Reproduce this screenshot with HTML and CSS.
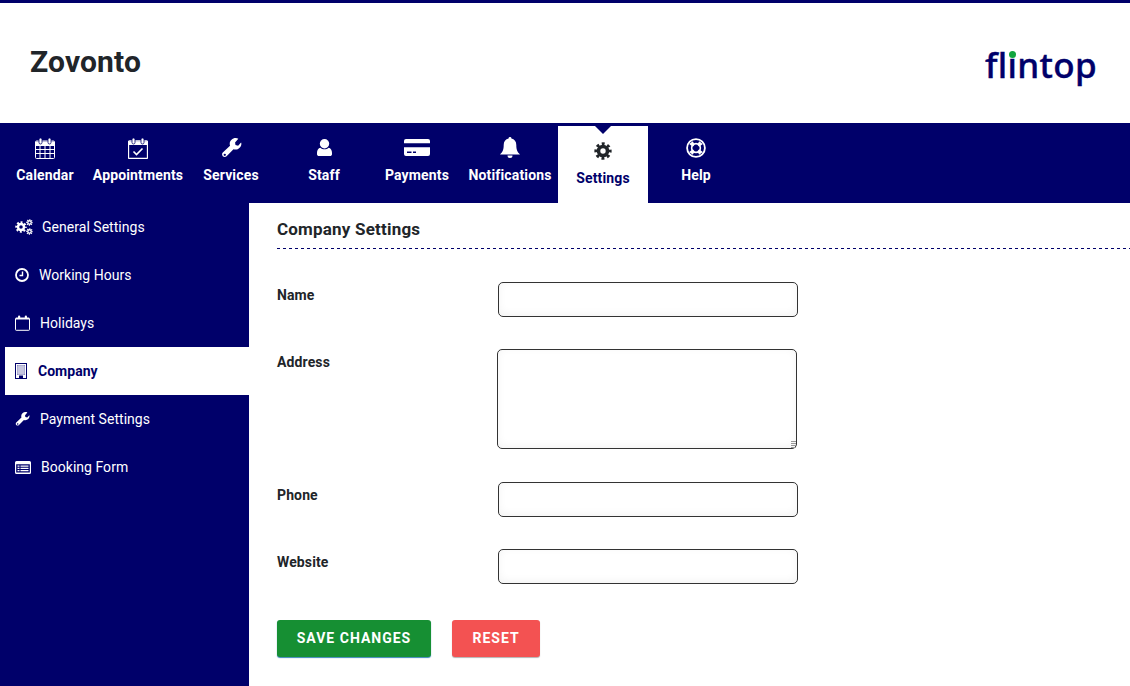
FILE: index.html
```html
<!DOCTYPE html>
<html lang="en">
<head>
	<meta charset="utf-8">
	<title>Zovonto - Company Settings</title>
	<link rel="stylesheet" href="styles.css">
</head>
<body>

	<!-- shared icons -->
	<svg class="icon-defs" width="0" height="0">
		<symbol id="i-wrench" viewBox="0 0 20 20">
			<path fill-rule="evenodd" d="M19.400 5.400c0 3-2.600 5.600-5.600 5.600-.7 0-1.300-.1-1.900-.3l-6.600 6.700c-1 1-2.600 1-3.600 0-.9-1-.9-2.500 0-3.500l6.900-6.600c-.2-.6-.3-1.200-.3-1.900C8.300 2.400 11 0 14 0c.9 0 1.800.2 2.500.6l-3.100 3.600.4 2.500 2.500.6 2.800-3.100c.2.300.3.800.3 1.200zM3.600 14.900a1.100 1.100 0 1 0 0 2.200 1.100 1.100 0 0 0 0-2.200z"/>
		</symbol>
		<symbol id="i-gear" viewBox="0 0 20 20">
			<circle cx="10" cy="10" r="5" fill="none" stroke="currentColor" stroke-width="4"/>
			<circle cx="10" cy="10" r="7.900" fill="none" stroke="currentColor" stroke-width="3.400" stroke-dasharray="3.200 3" stroke-dashoffset="1.600"/>
		</symbol>
	</svg>

	<header class="top-header">
		<h1 class="brand">Zovonto</h1>
		<div class="logo">fl<span class="logo-i">i</span>ntop</div>
	</header>

	<nav class="main-nav">
		<a class="nav-item">
			<svg class="nav-icon" width="20" height="22" viewBox="0 0 20 22">
				<path d="M1.500 4h17a1 1 0 0 1 1 1v15.500a1 1 0 0 1-1 1h-17a1 1 0 0 1-1-1V5a1 1 0 0 1 1-1z" fill="none" stroke="currentColor"/>
				<path d="M1 4.500h18v4.500H1z"/>
				<path d="M1 12.500h18M1 16.500h18M5 9v12M10 9v12M15 9v12" stroke="currentColor" fill="none"/>
				<rect x="4" y="1" width="3" height="6" rx="1.500" stroke="#00006a" stroke-width=".8"/>
				<rect x="13" y="1" width="3" height="6" rx="1.500" stroke="#00006a" stroke-width=".8"/>
			</svg>
			<span>Calendar</span>
		</a>
		<a class="nav-item">
			<svg class="nav-icon" width="20" height="22" viewBox="0 0 20 22">
				<path d="M1.500 4h17a1 1 0 0 1 1 1v15.500a1 1 0 0 1-1 1h-17a1 1 0 0 1-1-1V5a1 1 0 0 1 1-1z" fill="none" stroke="currentColor" stroke-width="1.300"/>
				<path d="M1 4.500h18v3.500H1z"/>
				<path d="M5.500 14.500l3 3 6-6" fill="none" stroke="currentColor" stroke-width="1.600"/>
				<rect x="4" y="1" width="3" height="6" rx="1.500" stroke="#00006a" stroke-width=".8"/>
				<rect x="13" y="1" width="3" height="6" rx="1.500" stroke="#00006a" stroke-width=".8"/>
			</svg>
			<span>Appointments</span>
		</a>
		<a class="nav-item">
			<svg class="nav-icon" width="21" height="22"><use href="#i-wrench" y="1" width="21" height="21"/></svg>
			<span>Services</span>
		</a>
		<a class="nav-item">
			<svg class="nav-icon" width="15" height="22" viewBox="0 0 15 22">
				<circle cx="7.500" cy="6.700" r="4.700"/>
				<path d="M3.400 10.800c1.100 1 2.500 1.500 4.100 1.500s3-.5 4.100-1.500c2.100.5 3.400 2.300 3.400 5v1.400c0 1-.9 1.800-2 1.800H2c-1.100 0-2-.8-2-1.800v-1.400c0-2.700 1.300-4.500 3.400-5z"/>
			</svg>
			<span>Staff</span>
		</a>
		<a class="nav-item">
			<svg class="nav-icon" width="26" height="22" viewBox="0 0 26 22">
				<path d="M2 2h22a2 2 0 0 1 2 2v2.300H0V4a2 2 0 0 1 2-2z"/>
				<path fill-rule="evenodd" d="M0 10.300h26V17a2 2 0 0 1-2 2H2a2 2 0 0 1-2-2zM3 14.500V16h4.500v-1.500zM9 14.500V16h3v-1.500z"/>
			</svg>
			<span>Payments</span>
		</a>
		<a class="nav-item">
			<svg class="nav-icon" width="20" height="22" viewBox="0 0 20 22">
				<path d="M10 0a1.400 1.400 0 0 1 1.400 1.500C14.500 2 16.300 4.500 16.300 8c0 5 1.200 7 3.700 9.500H0C2.500 15 3.700 13 3.700 8c0-3.500 1.800-6 4.900-6.500A1.400 1.400 0 0 1 10 0z"/>
				<path d="M7.500 18.500h5a2.500 2.500 0 0 1-5 0z"/>
			</svg>
			<span>Notifications</span>
		</a>
		<a class="nav-item nav-item-active">
			<svg class="nav-icon" width="18" height="22"><use href="#i-gear" y="2" width="18" height="18"/></svg>
			<span>Settings</span>
		</a>
		<a class="nav-item">
			<svg class="nav-icon" width="20" height="22" viewBox="-1 -1 22 22">
				<circle cx="10" cy="10" r="9.800" fill="none" stroke="currentColor" stroke-width="2"/>
				<circle cx="10" cy="10" r="4.800" fill="none" stroke="currentColor" stroke-width="1.800"/>
				<path d="M2.500 5.500l4-3 2 4-2 2zM17.500 5.500l-4-3-2 4 2 2zM2.500 14.500l4 3 2-4-2-2zM17.500 14.500l-4 3-2-4 2-2z"/>
			</svg>
			<span>Help</span>
		</a>
	</nav>

	<div class="page">
		<aside class="side-nav">
			<a class="side-item">
				<svg class="side-icon" width="18" height="16" viewBox="0 0 18 16">
					<use href="#i-gear" x="0" y="2" width="12" height="12"/>
					<use href="#i-gear" x="11" y="0" width="7" height="7"/>
					<use href="#i-gear" x="11" y="9" width="7" height="7"/>
				</svg>
				<span class="side-label label-general">General Settings</span>
			</a>
			<a class="side-item">
				<svg class="side-icon" width="14" height="14" viewBox="0 0 14 14">
					<circle cx="7" cy="7" r="6" fill="none" stroke="currentColor" stroke-width="1.800"/>
					<path d="M7.500 3.500v4H4.500" fill="none" stroke="currentColor" stroke-width="1.400"/>
				</svg>
				<span class="side-label label-hours">Working Hours</span>
			</a>
			<a class="side-item">
				<svg class="side-icon" width="15" height="16" viewBox="0 0 15 16">
					<path d="M1.200 3h12.600a.7.7 0 0 1 .7.700v10.900a.7.7 0 0 1-.7.700H1.200a.7.7 0 0 1-.7-.7V3.700a.7.7 0 0 1 .7-.7z" fill="none" stroke="currentColor"/>
					<path d="M1 3h13v1.500H1z"/>
					<rect x="3" y="0.500" width="2.200" height="3.500" rx="1.100"/>
					<rect x="9.800" y="0.500" width="2.200" height="3.500" rx="1.100"/>
				</svg>
				<span class="side-label label-holidays">Holidays</span>
			</a>
			<a class="side-item side-item-active">
				<svg class="side-icon" width="12" height="16" viewBox="0 0 12 16">
					<path fill-rule="evenodd" d="M0 0h12v16H0zM1 1v14h10V1z"/>
					<path d="M4 12.500h4V15.500H4z"/>
					<path d="M2 2h8v10H2z" opacity=".45"/>
					<path d="M4 2v10M6 2v10M8 2v10M2 4h8M2 6h8M2 8h8M2 10h8" stroke="#fff" stroke-width=".6" fill="none"/>
				</svg>
				<span class="side-label label-company">Company</span>
			</a>
			<a class="side-item">
				<svg class="side-icon" width="15" height="15"><use href="#i-wrench" width="15" height="15"/></svg>
				<span class="side-label label-holidays">Payment Settings</span>
			</a>
			<a class="side-item">
				<svg class="side-icon" width="16" height="13" viewBox="0 0 16 13">
					<path fill-rule="evenodd" d="M1.500 0h13A1.500 1.500 0 0 1 16 1.500v10a1.500 1.500 0 0 1-1.500 1.500h-13A1.500 1.500 0 0 1 0 11.500v-10A1.500 1.500 0 0 1 1.500 0zM1.200 3.200v8.300h13.600V3.200z"/>
					<path d="M2.500 4.500h2v1.300h-2zM5.500 4.500h8v1.300h-8zM2.500 6.700h2V8h-2zM5.500 6.700h8V8h-8zM2.500 8.900h2v1.300h-2zM5.500 8.900h8v1.300h-8z"/>
				</svg>
				<span class="side-label label-booking">Booking Form</span>
			</a>
		</aside>

		<main class="content">
			<h2 class="section-title">Company Settings</h2>
			<form class="settings-form">
				<div class="form-row">
					<label class="form-label">Name</label>
					<input class="form-input" type="text">
				</div>
				<div class="form-row">
					<label class="form-label">Address</label>
					<textarea class="form-input form-textarea"></textarea>
				</div>
				<div class="form-row">
					<label class="form-label">Phone</label>
					<input class="form-input" type="text">
				</div>
				<div class="form-row">
					<label class="form-label">Website</label>
					<input class="form-input" type="text">
				</div>
				<div class="form-actions">
					<button class="btn btn-save" type="button">Save Changes</button>
					<button class="btn btn-reset" type="button">Reset</button>
				</div>
			</form>
		</main>
	</div>

</body>
</html>
```

FILE: styles.css
```css
html, body {
	margin: 0;
	padding: 0;
	height: 100%;
	overflow: hidden;
}
body {
	display: flex;
	flex-direction: column;
	font-family: Roboto, "Liberation Sans", sans-serif;
	color: #212529;
	background: #fff;
}
.icon-defs {
	position: absolute;
}

/* header */
.top-header {
	display: flex;
	justify-content: space-between;
	align-items: flex-start;
	height: 120px;
	flex: none;
	border-top: 3px solid #00006a;
	padding: 0 33px 0 30px;
}
.brand {
	margin: 41px 0 0;
	font-size: 30px;
	line-height: 36px;
	font-weight: 700;
	letter-spacing: .15px;
}
.logo {
	margin-top: 37px;
	font-family: "Noto Sans", sans-serif;
	font-size: 35px;
	line-height: 50px;
	font-weight: 500;
	letter-spacing: .3px;
	color: #00006a;
	-webkit-text-stroke: .4px #00006a;
}
.logo-i {
	position: relative;
}
.logo-i::after {
	content: "";
	position: absolute;
	left: 1px;
	top: 10px;
	width: 7px;
	height: 7px;
	border-radius: 50%;
	background: #12a53f;
}

/* main nav */
.main-nav {
	display: flex;
	gap: 3px;
	height: 80px;
	flex: none;
	background: #00006a;
}
.nav-item {
	display: flex;
	flex-direction: column;
	align-items: center;
	width: 90px;
	padding-top: 14px;
	box-sizing: border-box;
	color: #fff;
	fill: currentColor;
	font-size: 14px;
	font-weight: 700;
	letter-spacing: .15px;
	white-space: nowrap;
}
.nav-icon {
	height: 22px;
	margin-bottom: 8px;
}
.nav-item-active {
	position: relative;
	margin-top: 3px;
	background: #fff;
	color: #00006a;
}
.nav-item-active .nav-icon {
	color: #212529;
	fill: #212529;
}
.nav-item-active::before {
	content: "";
	position: absolute;
	top: 0;
	left: 37px;
	border: 8px solid transparent;
	border-top-color: #00006a;
	border-bottom: 0;
}

/* page body */
.page {
	display: flex;
	flex: 1;
	min-height: 0;
}
.side-nav {
	width: 249px;
	flex: none;
	background: #00006a;
}
.side-item {
	display: flex;
	align-items: center;
	height: 48px;
	padding-left: 15px;
	box-sizing: border-box;
	color: #fff;
	fill: currentColor;
	font-size: 14px;
	letter-spacing: .03px;
}
.side-icon {
	flex: none;
}
.label-general { margin-left: 9px; }
.label-hours { margin-left: 10px; }
.label-holidays { margin-left: 10px; }
.label-company { margin-left: 11px; }
.label-booking { margin-left: 10px; }
.side-item-active {
	margin-left: 5px;
	padding-left: 10px;
	background: #fff;
	color: #00006a;
	font-weight: 700;
}

/* form */
.content {
	flex: 1;
	min-width: 0;
	padding-left: 28px;
}
.section-title {
	margin: 0;
	padding: 16px 0 10px;
	font-size: 17px;
	line-height: 20px;
	font-weight: 700;
	letter-spacing: .2px;
	background: repeating-linear-gradient(90deg, #00006a 0 3px, transparent 3px 6px) left bottom / 100% 1px no-repeat;
}
.settings-form {
	padding-top: 33px;
}
.form-row {
	display: flex;
	align-items: flex-start;
	margin-bottom: 32px;
}
.form-label {
	width: 221px;
	flex: none;
	margin-top: 4px;
	font-size: 14px;
	line-height: 18px;
	font-weight: 700;
	letter-spacing: .12px;
}
.form-input {
	display: block;
	width: 300px;
	height: 35px;
	box-sizing: border-box;
	margin: 0;
	border: 1px solid #333;
	border-radius: 5px;
	background: #fff;
	box-shadow: inset 0 -2px 8px rgba(0, 0, 0, .05);
	outline: none;
}
.form-textarea {
	height: 100px;
	margin: 0 0 1px -1px;
}
.form-textarea::-webkit-resizer {
	background: repeating-linear-gradient(180deg, #999 0 1px, transparent 1px 2px) right bottom / 5px 7px no-repeat;
}
.form-actions {
	display: flex;
	gap: 21px;
	padding-top: 4px;
}
.btn {
	height: 37px;
	padding: 0 0 2px;
	border: 0;
	border-radius: 3px;
	color: #fff;
	font-family: Roboto, sans-serif;
	font-size: 14px;
	font-weight: 700;
	letter-spacing: 1px;
	text-transform: uppercase;
	box-shadow: 0 1px 1px rgba(0, 0, 0, .3);
}
.btn-save {
	width: 154px;
	background: #168f33;
	box-shadow: 0 1px 1px #3a87b8;
}
.btn-reset {
	width: 88px;
	background: #f35252;
}
```
